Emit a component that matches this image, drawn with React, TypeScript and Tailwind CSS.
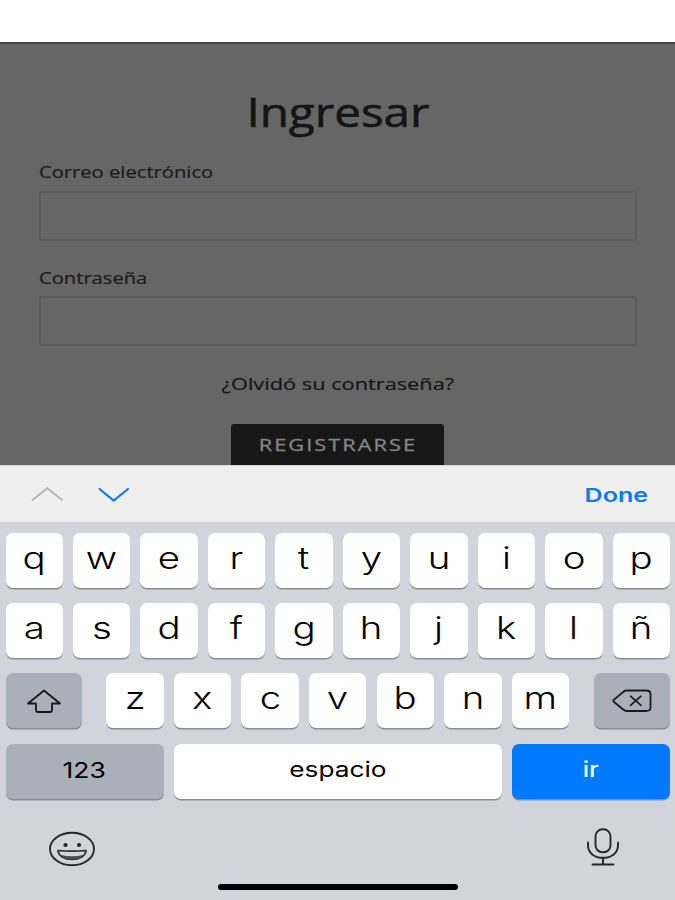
import { clsx } from "clsx";
import type React from "react";

const KEY_ROWS = ["qwertyuiop", "asdfghjklñ"];
const LAST_ROW = "zxcvbnm";

interface KeyProps {
	className?: string;
	children: React.ReactNode;
}

const Key: React.FC<KeyProps> = ({ className, children }) => (
	<button
		type="button"
		className={clsx(
			"flex h-[55px] items-center justify-center rounded-[7px] shadow-[0_1.5px_0.5px_#898c91]",
			className,
		)}
	>
		{children}
	</button>
);

const LetterKey: React.FC<{ letter: string }> = ({ letter }) => (
	<Key className="w-[57.4px] bg-white pb-[5px]">
		<span className="inline-block scale-x-[1.26] text-[30.5px] leading-none font-light text-black">
			{letter}
		</span>
	</Key>
);

const Field: React.FC<{ label: string; id: string }> = ({ label, id }) => (
	<div className="h-[105.5px] shrink-0">
		<label
			htmlFor={id}
			className="block h-[28.5px] w-fit origin-left scale-x-[1.26] text-[16px] leading-[20px] whitespace-nowrap [-webkit-text-stroke:0.2px]"
		>
			{label}
		</label>
		<input
			id={id}
			className="block h-[50px] w-full rounded-[3px] border-2 border-[#5b5b5b] bg-transparent px-3 outline-none"
		/>
	</div>
);

const LoginForm = () => (
	<form className="flex h-[423px] shrink-0 flex-col overflow-hidden border-t-2 border-[#424542] bg-[#666] px-[38.5px] font-['Open_Sans',sans-serif] text-[#1b1b1b]">
		<h1 className="mt-[41px] h-[77px] shrink-0 text-center text-[40px] leading-[54px] text-[#151515] [-webkit-text-stroke:0.6px]">
			<span className="inline-block scale-x-[1.19]">Ingresar</span>
		</h1>
		<Field id="email" label="Correo electrónico" />
		<Field id="password" label="Contraseña" />
		<a
			href="#recover"
			className="-mt-px h-[51.5px] shrink-0 text-center text-[17px] leading-[23px] text-[#151515] [-webkit-text-stroke:0.2px]"
		>
			<span className="inline-block scale-x-[1.28]">
				¿Olvidó su contraseña?
			</span>
		</a>
		<button
			type="button"
			className="h-[60px] w-[213px] shrink-0 self-center rounded-[3px] bg-[#171717] pb-[17px] text-[17px] tracking-[1.6px] text-[#858585] [-webkit-text-stroke:0.3px]"
		>
			<span className="inline-block scale-x-[1.28]">REGISTRARSE</span>
		</button>
	</form>
);

const ShiftIcon = () => (
	<svg width="36" height="26" viewBox="0 0 36 26" fill="none">
		<path
			d="M18 2.5 34 15.5H26V22Q26 24 24 24H12Q10 24 10 22V15.5H2Z"
			stroke="#17191d"
			strokeWidth="1.8"
			strokeLinejoin="round"
		/>
	</svg>
);

const BackspaceIcon = () => (
	<svg width="40" height="24" viewBox="0 0 40 24" fill="none">
		<path
			d="M14.5 1.5H34Q38.5 1.5 38.5 5V18.5Q38.5 22 34 22H14.5Q13 22 11.5 20.8L1.8 12.8Q.8 11.8 1.8 10.8L11.5 2.7Q13 1.5 14.5 1.5Z"
			stroke="#17191d"
			strokeWidth="1.8"
		/>
		<path
			d="m18.5 7.2 10.5 9.2M29 7.2 18.5 16.4"
			stroke="#17191d"
			strokeWidth="1.7"
			strokeLinecap="round"
		/>
	</svg>
);

const EmojiIcon = () => (
	<svg width="48" height="36" viewBox="0 0 48 36" fill="none">
		<ellipse cx="24" cy="18" rx="22" ry="16.2" stroke="#24272c" strokeWidth="1.9" />
		<ellipse cx="17.5" cy="14" rx="2.1" ry="1.9" fill="#24272c" />
		<ellipse cx="31" cy="14" rx="2.1" ry="1.9" fill="#24272c" />
		<path
			d="M10 19.5Q24 20.8 38 19.5C37.5 25 31.5 28.5 24 28.5S10.5 25 10 19.5Z"
			stroke="#24272c"
			strokeWidth="1.7"
			strokeLinejoin="round"
		/>
		<path d="M13 24Q24 26.5 35 24C33 27 29 28.5 24 28.5S15 27 13 24Z" fill="#4b4f55" />
	</svg>
);

const MicIcon = () => (
	<svg width="34" height="38" viewBox="0 0 34 38" fill="none">
		<g stroke="#24272c" strokeWidth="1.9" strokeLinecap="round">
			<rect x="9.5" y="1.3" width="15" height="23" rx="7" />
			<path d="M2 14.5V17.5C2 24.8 8.5 29.8 17 29.8S32 24.8 32 17.5V14.5" />
			<path d="M17 30V36.5M6.5 36.5H27.5" />
		</g>
	</svg>
);

const Toolbar = () => (
	<div className="flex h-[57px] shrink-0 items-center border-t border-[#d9d9d9] bg-[#efefef] pr-[27px] pl-[31px]">
		<svg width="100" height="18" viewBox="0 0 100 18" fill="none">
			<path d="M1.5 15 16.3 3.2 31 15" stroke="#b5b5b5" strokeWidth="1.9" strokeLinecap="round" />
			<path d="M68.5 4 82.7 15.5 97 4" stroke="#0d79fb" strokeWidth="2.2" strokeLinecap="round" />
		</svg>
		<span className="ml-auto inline-block origin-right scale-x-[1.32] pt-[4px] text-[19px] font-semibold text-[#0d79fb]">
			Done
		</span>
	</div>
);

const Keyboard = () => (
	<div className="flex h-[378px] shrink-0 flex-col bg-[#d1d4da] pt-[11px]">
		<div className="flex flex-col gap-[15.2px] pr-[5px] pl-[5.5px]">
			{KEY_ROWS.map((row) => (
				<div key={row} className="flex justify-between">
					{[...row].map((letter) => (
						<LetterKey key={letter} letter={letter} />
					))}
				</div>
			))}
			<div className="flex justify-between">
				<Key className="w-[76px] bg-[#aab0ba]">
					<ShiftIcon />
				</Key>
				<div className="flex gap-[10.2px]">
					{[...LAST_ROW].map((letter) => (
						<LetterKey key={letter} letter={letter} />
					))}
				</div>
				<Key className="w-[76px] bg-[#aab0ba]">
					<BackspaceIcon />
				</Key>
			</div>
			<div className="flex justify-between">
				<Key className="w-[158px] bg-[#aab0ba] text-[21px] text-black">
					<span className="inline-block scale-x-[1.26]">123</span>
				</Key>
				<Key className="w-[328px] bg-white pb-[2px] text-[21px] text-black">
					<span className="inline-block scale-x-[1.25]">espacio</span>
				</Key>
				<Key className="w-[158px] bg-[#007aff] pb-[2px] text-[21px] font-medium text-white">
					<span className="inline-block scale-x-[1.2]">ir</span>
				</Key>
			</div>
		</div>
		<div className="mt-[29px] flex justify-between pr-[55px] pl-[48px]">
			<div className="pt-[3px]">
				<EmojiIcon />
			</div>
			<MicIcon />
		</div>
		<div className="mt-[17px] h-[6px] w-[240px] self-center rounded-full bg-black" />
	</div>
);

export default function App() {
	return (
		<div className="flex h-[900px] w-[675px] flex-col overflow-hidden bg-white pt-[42px] font-[Inter,sans-serif]">
			<LoginForm />
			<Toolbar />
			<Keyboard />
		</div>
	);
}
